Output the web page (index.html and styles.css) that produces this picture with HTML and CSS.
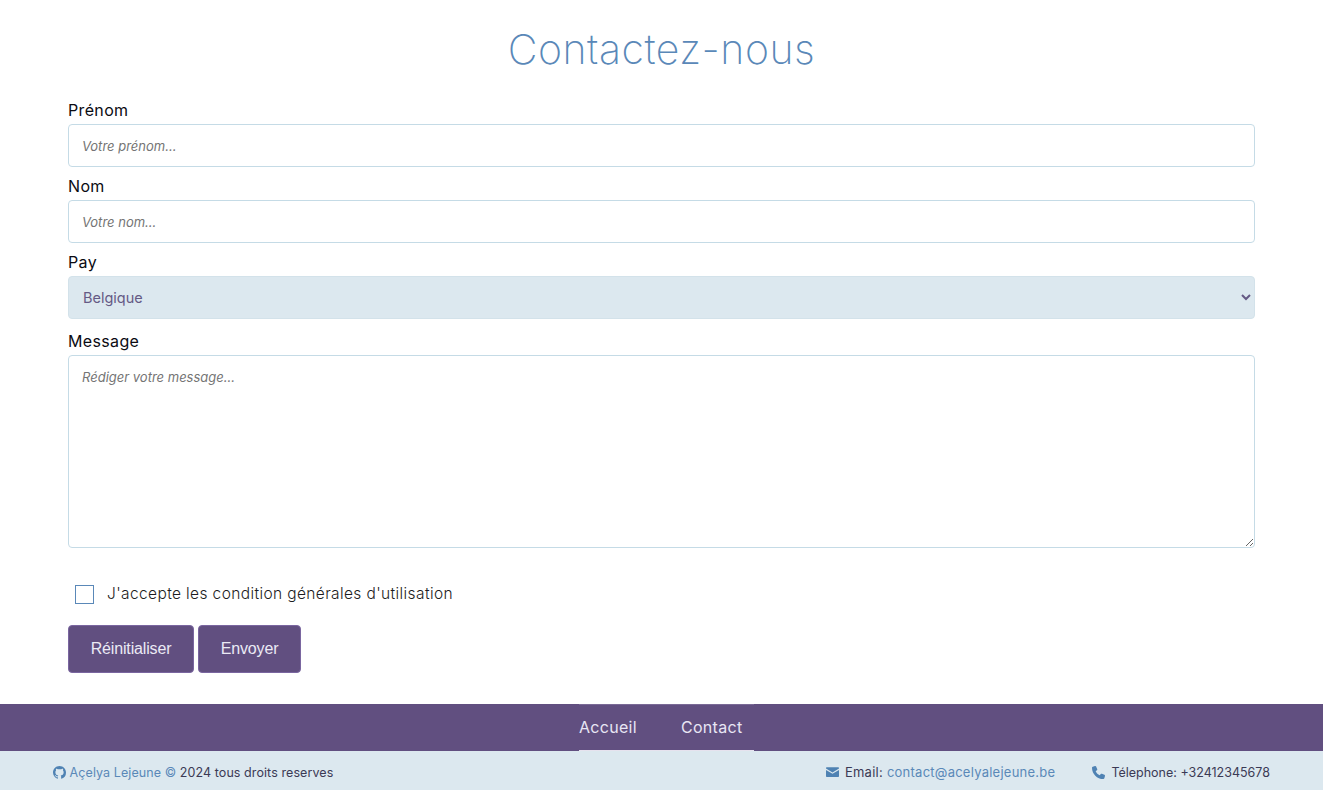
FILE: index.html
```html
<!DOCTYPE html>
<html lang="fr">
<head>
<meta charset="utf-8">
<title>Contactez-nous</title>
<link rel="stylesheet" href="styles.css">
</head>
<body>
<main class="page">
  <h1 class="title">Contactez-nous</h1>
  <form class="form">
    <div class="field">
      <label class="label" for="prenom">Prénom</label>
      <input class="control" id="prenom" type="text" placeholder="Votre prénom...">
    </div>
    <div class="field">
      <label class="label" for="nom">Nom</label>
      <input class="control" id="nom" type="text" placeholder="Votre nom...">
    </div>
    <div class="field field-select">
      <label class="label" for="pays">Pay</label>
      <select class="control select" id="pays">
        <option>Belgique</option>
      </select>
    </div>
    <div class="field">
      <label class="label" for="message">Message</label>
      <textarea class="control area" id="message" placeholder="Rédiger votre message..."></textarea>
    </div>
    <div class="check">
      <input class="box" id="cgu" type="checkbox">
      <label class="check-label" for="cgu">J'accepte les condition générales d'utilisation</label>
    </div>
    <div class="actions">
      <button class="btn" type="reset">Réinitialiser</button>
      <button class="btn btn-send" type="submit">Envoyer</button>
    </div>
  </form>
</main>
<footer class="footer">
  <nav class="nav">
    <div class="nav-inner">
      <a class="nav-link" href="#">Accueil</a>
      <a class="nav-link" href="#">Contact</a>
    </div>
  </nav>
  <div class="bottom">
    <div class="credit">
      <svg class="icon icon-git" viewBox="0 0 16 16" aria-hidden="true"><path d="M8 0C3.58 0 0 3.58 0 8c0 3.54 2.29 6.53 5.47 7.59.4.07.55-.17.55-.38 0-.19-.01-.82-.01-1.49-2.01.37-2.53-.49-2.69-.94-.09-.23-.48-.94-.82-1.13-.28-.15-.68-.52-.01-.53.63-.01 1.08.58 1.23.82.72 1.21 1.87.87 2.33.66.07-.52.28-.87.51-1.07-1.78-.2-3.64-.89-3.64-3.95 0-.87.31-1.59.82-2.15-.08-.2-.36-1.02.08-2.12 0 0 .67-.21 2.2.82.64-.18 1.32-.27 2-.27s1.36.09 2 .27c1.53-1.04 2.2-.82 2.2-.82.44 1.1.16 1.92.08 2.12.51.56.82 1.27.82 2.15 0 3.07-1.87 3.75-3.65 3.95.29.25.54.73.54 1.48 0 1.07-.01 1.93-.01 2.2 0 .21.15.46.55.38A8.01 8.01 0 0 0 16 8c0-4.42-3.58-8-8-8z"/></svg>
      <a class="link" href="#">Açelya Lejeune</a> <span class="copy">©</span> 2024 tous droits reserves
    </div>
    <div class="contacts">
      <div class="contact">
        <svg class="icon icon-mail" viewBox="0 0 16 12" aria-hidden="true"><path d="M1.2 0h13.600C15.500 0 16 .5 16 1.200v.5L8 6.600 0 1.700v-.5C0 .5.500 0 1.200 0zM0 3.400v7.400c0 .7.500 1.200 1.200 1.200h13.600c.7 0 1.200-.5 1.200-1.200V3.400L8 8.300 0 3.400z"/></svg>
        <span class="email">Email: <a class="link" href="#">contact@acelyalejeune.be</a></span>
      </div>
      <div class="contact">
        <svg class="icon" viewBox="0 0 512 512" aria-hidden="true"><path d="M164.900 24.600c-7.700-18.600-28-28.500-47.400-23.200l-88 24C12.100 30.200 0 46 0 64C0 311.400 200.600 512 448 512c18 0 33.800-12.100 38.600-29.500l24-88c5.300-19.400-4.600-39.700-23.200-47.400l-96-40c-16.300-6.800-35.200-2.100-46.300 11.600L304.700 368C234.300 334.700 177.300 277.700 144 207.300L193.300 167c13.700-11.200 18.400-30 11.600-46.300l-40-96z"/></svg>
        <span>Télephone: +32412345678</span>
      </div>
    </div>
  </div>
</footer>
</body>
</html>
```
FILE: styles.css
```css
* { box-sizing: border-box; }
html, body { margin: 0; padding: 0; }
body {
  height: 790px;
  overflow: hidden;
  display: flex;
  flex-direction: column;
  background: #fff;
  color: #212529;
  font-family: "Inter", "Noto Sans", sans-serif;
}
.page { flex: 1; padding: 0 68px; }
.title {
  margin: 0;
  padding-top: 23px;
  height: 98px;
  text-align: center;
  font-size: 41px;
  line-height: 52px;
  font-weight: 200;
  letter-spacing: 0.5px;
  color: #5a88b8;
}
.form { display: flex; flex-direction: column; }
.field { display: flex; flex-direction: column; margin-bottom: 7px; }
.field-select { margin-bottom: 10px; }
.label {
  height: 26px;
  font-size: 16px;
  line-height: 24px;
  letter-spacing: 0.35px;
  color: #0b0b12;
}
.control {
  display: block;
  width: 100%;
  height: 43px;
  padding: 0 13px;
  border: 1px solid #c5dbe6;
  border-radius: 4px;
  background: #fff;
  font-family: inherit;
  font-size: 13px;
  color: #212529;
  outline: none;
}
.control::placeholder { color: #757575; font-style: italic; opacity: 1; }
.select { padding-left: 10px; background: #dce8ef; border-color: #d3e2ea; color: #655a85; font-size: 14.5px; }
.area { height: 193px; padding-top: 13px; resize: vertical; }
.check {
  display: flex;
  align-items: center;
  margin: 29px 0 21px 7px;
  height: 20px;
}
.box {
  appearance: none;
  width: 19px;
  height: 19px;
  margin: 0 13px 0 0;
  border: 1px solid #5a88b8;
  background: #fff;
}
.check-label { padding-bottom: 2px; font-size: 15.5px; font-weight: 300; letter-spacing: 0.38px; color: #1c1c22; }
.actions { display: flex; gap: 4px; }
.btn {
  height: 48px;
  width: 126px;
  border: 1px solid #7a66a0;
  border-radius: 4px;
  background: #614f80;
  color: #ebeaf5;
  font-family: "Liberation Sans", Arial, sans-serif;
  font-size: 16px;
  letter-spacing: -0.15px;
}
.btn-send { width: 103px; }
.footer { flex: none; font-size: 12.5px; }
.nav { height: 47px; background: #614f80; display: flex; justify-content: center; }
.nav-inner {
  display: flex;
  width: 175px;
  margin-left: 10px;
  padding-bottom: 2px;
  gap: 44px;
  align-items: center;
  border-top: 1px solid #7a6a96;
  border-bottom: 1px solid #e6e2ee;
}
.nav-link { color: #e8e6f4; text-decoration: none; font-size: 16px; letter-spacing: 0.3px; }
.bottom {
  height: 39px;
  padding: 3px 53px 0;
  background: #dce8ef;
  display: flex;
  justify-content: space-between;
  align-items: center;
  color: #3b3a55;
}
.credit { letter-spacing: 0.08px; }
.contacts { display: flex; gap: 37px; }
.contact { display: flex; align-items: center; gap: 6px; }
.email { font-size: 13px; letter-spacing: 0.25px; }
.icon { width: 13px; height: 13px; fill: #4f82b3; flex: none; }
.icon-git { vertical-align: -2px; }
.icon-mail { height: 10px; }
.link { color: #5a88b8; text-decoration: none; }
.copy { color: #5a88b8; }
```
